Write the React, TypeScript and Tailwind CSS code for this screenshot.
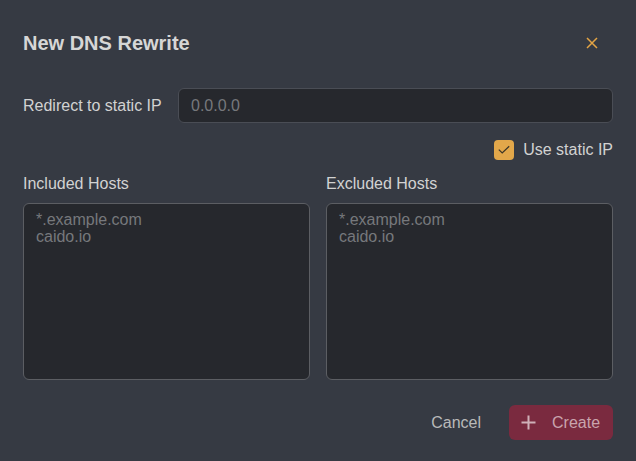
import React from 'react';

const font = { fontFamily: '"Liberation Sans", Arial, sans-serif' };

export default function App() {
  return (
    <div className="w-full h-[461px] bg-[#363a43] px-[23px] pt-[28px] flex flex-col" style={font}>
      <div className="flex items-center justify-between h-[30px]">
        <h1 className="text-[20px] font-bold text-[#d6d6d6] leading-[30px]">New DNS Rewrite</h1>
        <button className="w-[30px] h-[30px] flex items-center justify-center mr-[6px]">
          <svg width="12" height="12" viewBox="0 0 12 12" fill="none" stroke="#e3a445" strokeWidth="1.5">
            <path d="M1 1L11 11M11 1L1 11" />
          </svg>
        </button>
      </div>

      <div className="flex items-center mt-[30px]">
        <label className="w-[155px] text-[16px] text-[#d2d2d2]">Redirect to static IP</label>
        <input
          placeholder="0.0.0.0"
          className="flex-1 h-[35px] rounded-[6px] bg-[#26282d] border border-[#4a4d55] px-[12px] text-[16px] text-[#d2d2d2] placeholder:text-[#76787c] outline-none"
        />
      </div>

      <div className="flex items-center justify-end mt-[17px] h-[20px] gap-[9px]">
        <span className="w-[20px] h-[20px] rounded-[4px] bg-[#e2a74a] flex items-center justify-center">
          <svg width="12" height="10" viewBox="0 0 12 10" fill="none" stroke="#3b3426" strokeWidth="1.2">
            <path d="M0.8 4.6L4.2 8L11.2 1.2" />
          </svg>
        </span>
        <span className="text-[16px] text-[#d2d2d2]">Use static IP</span>
      </div>

      <div className="grid grid-cols-2 gap-x-[16px] mt-[14px]">
        {['Included Hosts', 'Excluded Hosts'].map((label) => (
          <div key={label} className="flex flex-col">
            <label className="text-[16px] leading-[20px] text-[#d2d2d2]">{label}</label>
            <textarea
              placeholder={'*.example.com\ncaido.io'}
              className="mt-[9px] h-[177px] resize-none rounded-[6px] bg-[#26282d] border border-[#5c5e63] px-[12px] py-[7px] text-[16px] leading-[17px] text-[#d2d2d2] placeholder:text-[#76787c] outline-none"
            />
          </div>
        ))}
      </div>

      <div className="flex items-center justify-end mt-[25px] gap-[28px]">
        <button className="text-[16px] text-[#b9b9b9]">Cancel</button>
        <button className="h-[35px] w-[104px] rounded-[6px] bg-[#7a2a3f] flex items-center pl-[12px] gap-[16px]">
          <svg width="15" height="15" viewBox="0 0 15 15" fill="none" stroke="#cfb0b8" strokeWidth="2">
            <path d="M7.5 0.5V14.5M0.5 7.5H14.5" />
          </svg>
          <span className="text-[16px] text-[#c9a4ad]">Create</span>
        </button>
      </div>
    </div>
  );
}
